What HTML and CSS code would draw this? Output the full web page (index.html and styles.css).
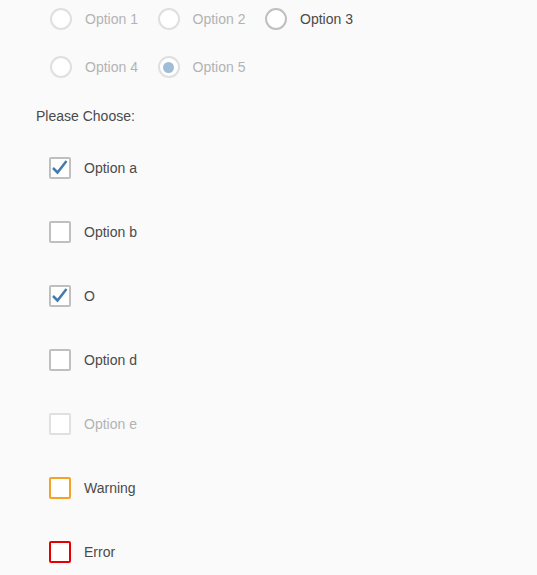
FILE: index.html
```html
<!DOCTYPE html>
<html>
<head>
<meta charset="utf-8">
<link rel="stylesheet" href="styles.css">
</head>
<body>
<div class="radios">
  <div class="radio-row">
    <div class="radio disabled"><span class="circle"></span><span class="rlabel">Option 1</span></div>
    <div class="radio disabled"><span class="circle"></span><span class="rlabel">Option 2</span></div>
    <div class="radio"><span class="circle"></span><span class="rlabel">Option 3</span></div>
  </div>
  <div class="radio-row">
    <div class="radio disabled"><span class="circle"></span><span class="rlabel">Option 4</span></div>
    <div class="radio disabled selected"><span class="circle"><span class="dot"></span></span><span class="rlabel">Option 5</span></div>
  </div>
</div>
<div class="title">Please Choose:</div>
<div class="checks">
  <div class="check"><span class="box"><svg class="tick" viewBox="0 0 18 18" width="18" height="18"><path d="M2 9 L6.5 13.5 L15.5 2" fill="none" stroke="#427cac" stroke-width="2.5"/></svg></span><span class="clabel">Option a</span></div>
  <div class="check"><span class="box"></span><span class="clabel">Option b</span></div>
  <div class="check"><span class="box"><svg class="tick" viewBox="0 0 18 18" width="18" height="18"><path d="M2 9 L6.5 13.5 L15.5 2" fill="none" stroke="#427cac" stroke-width="2.5"/></svg></span><span class="clabel">O</span></div>
  <div class="check"><span class="box"></span><span class="clabel">Option d</span></div>
  <div class="check disabled"><span class="box"></span><span class="clabel">Option e</span></div>
  <div class="check warning"><span class="box"></span><span class="clabel">Warning</span></div>
  <div class="check error"><span class="box"></span><span class="clabel">Error</span></div>
</div>
</body>
</html>
```
FILE: styles.css
```css
html, body {
  margin: 0;
  padding: 0;
  background: #fafafa;
  font-family: "Liberation Sans", Arial, sans-serif;
  font-size: 14px;
  color: #4a4a4a;
  overflow: hidden;
}
.radios {
  margin-top: -5px;
  padding-left: 50px;
}
.radio-row {
  display: flex;
  height: 48px;
  align-items: center;
}
.radio {
  display: flex;
  align-items: center;
  width: 107.5px;
}
.circle {
  box-sizing: border-box;
  width: 22px;
  height: 22px;
  border-radius: 50%;
  border: 2px solid #bfbfbf;
  background: #fff;
  display: flex;
  align-items: center;
  justify-content: center;
}
.rlabel {
  margin-left: 13px;
}
.radio.disabled .circle {
  border-color: #dfdfdf;
}
.radio.disabled .rlabel {
  color: #b3b3b3;
}
.dot {
  width: 11px;
  height: 11px;
  border-radius: 50%;
  background: #a0bcd6;
}
.title {
  padding-left: 36px;
  margin-top: 16px;
  line-height: 18px;
  height: 18px;
}
.checks {
  margin-top: 11px;
  padding-left: 49px;
}
.check {
  display: flex;
  align-items: center;
  height: 64px;
}
.box {
  box-sizing: border-box;
  width: 22px;
  height: 22px;
  border: 2px solid #bfbfbf;
  border-radius: 2px;
  background: #fff;
  display: flex;
  align-items: center;
  justify-content: center;
}
.tick {
  display: block;
}
.clabel {
  margin-left: 13px;
}
.check.disabled .box {
  border-color: #e0e0e0;
}
.check.disabled .clabel {
  color: #b3b3b3;
}
.check.warning .box {
  border-color: #f5a22a;
}
.check.error .box {
  border-color: #e80000;
}
```
